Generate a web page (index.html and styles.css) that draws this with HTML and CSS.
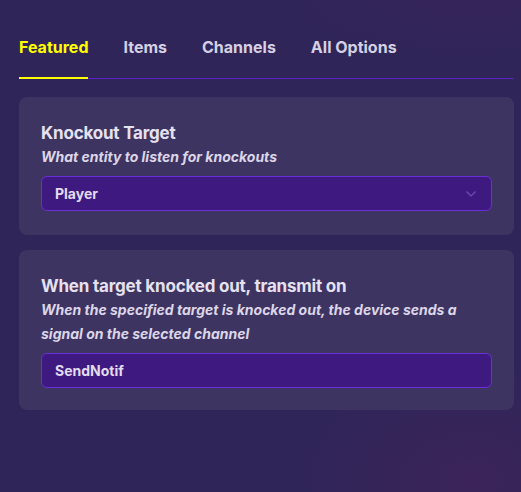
FILE: index.html
```html
<!DOCTYPE html>
<html>
<head>
<meta charset="utf-8">
<link rel="stylesheet" href="styles.css">
</head>
<body>
<div class="page">
  <nav class="tabs">
    <div class="tab active">Featured</div>
    <div class="tab">Items</div>
    <div class="tab">Channels</div>
    <div class="tab">All Options</div>
  </nav>
  <section class="card">
    <h2 class="title">Knockout Target</h2>
    <p class="desc">What entity to listen for knockouts</p>
    <div class="field select">
      <span>Player</span>
      <svg class="chev" width="10" height="6" viewBox="0 0 10 6"><path d="M0.5 0.5 L5 5 L9.5 0.5" fill="none" stroke="#6f4fb5" stroke-width="1.2"/></svg>
    </div>
  </section>
  <section class="card card-last">
    <h2 class="title">When target knocked out, transmit on</h2>
    <p class="desc">When the specified target is knocked out, the device sends a signal on the selected channel</p>
    <div class="field">
      <span>SendNotif</span>
    </div>
  </section>
</div>
</body>
</html>
```
FILE: styles.css
```css
html, body {
  margin: 0;
  padding: 0;
  height: 100%;
}
body {
  background-color: #2f2559;
  background-image:
    radial-gradient(ellipse 180px 120px at 470px 480px, rgba(70, 35, 90, 0.55), rgba(70, 35, 90, 0) 100%),
    radial-gradient(ellipse 200px 60px at 470px 0px, rgba(60, 35, 90, 0.5), rgba(60, 35, 90, 0) 100%);
  font-family: Inter, "Liberation Sans", sans-serif;
  color: #e4deee;
}
.page {
  padding: 0 7px 0 19px;
}
.tabs {
  display: flex;
  gap: 35px;
  padding-top: 37px;
  border-bottom: 1px solid #5a22c8;
  margin-bottom: 18px;
}
.tab {
  font-size: 16px;
  font-weight: 700;
  color: #d6d0e4;
  line-height: 20px;
  padding-bottom: 20px;
  margin-bottom: -1px;
  border-bottom: 2px solid transparent;
}
.tab.active {
  color: #ffff00;
  border-bottom-color: #ffff00;
}
.card {
  background: #3d3462;
  border-radius: 8px;
  padding: 24px 22px 24px 22px;
  margin-bottom: 15px;
}
.card-last {
  padding-bottom: 22px;
}
.title {
  margin: 0;
  font-size: 17px;
  font-weight: 700;
  letter-spacing: -0.2px;
  line-height: 24px;
  color: #e6e1ef;
}
.desc {
  margin: 0 0 7px 0;
  font-size: 14px;
  font-style: italic;
  font-weight: 700;
  line-height: 24px;
  color: #dcd6e8;
}
.field {
  display: flex;
  align-items: center;
  justify-content: space-between;
  height: 33px;
  padding: 0 13px;
  background: #3e1980;
  border: 1px solid #6a2fd6;
  border-radius: 6px;
  font-size: 14px;
  font-weight: 700;
  color: #e2dcef;
}
.chev {
  margin-right: 2px;
}
```
